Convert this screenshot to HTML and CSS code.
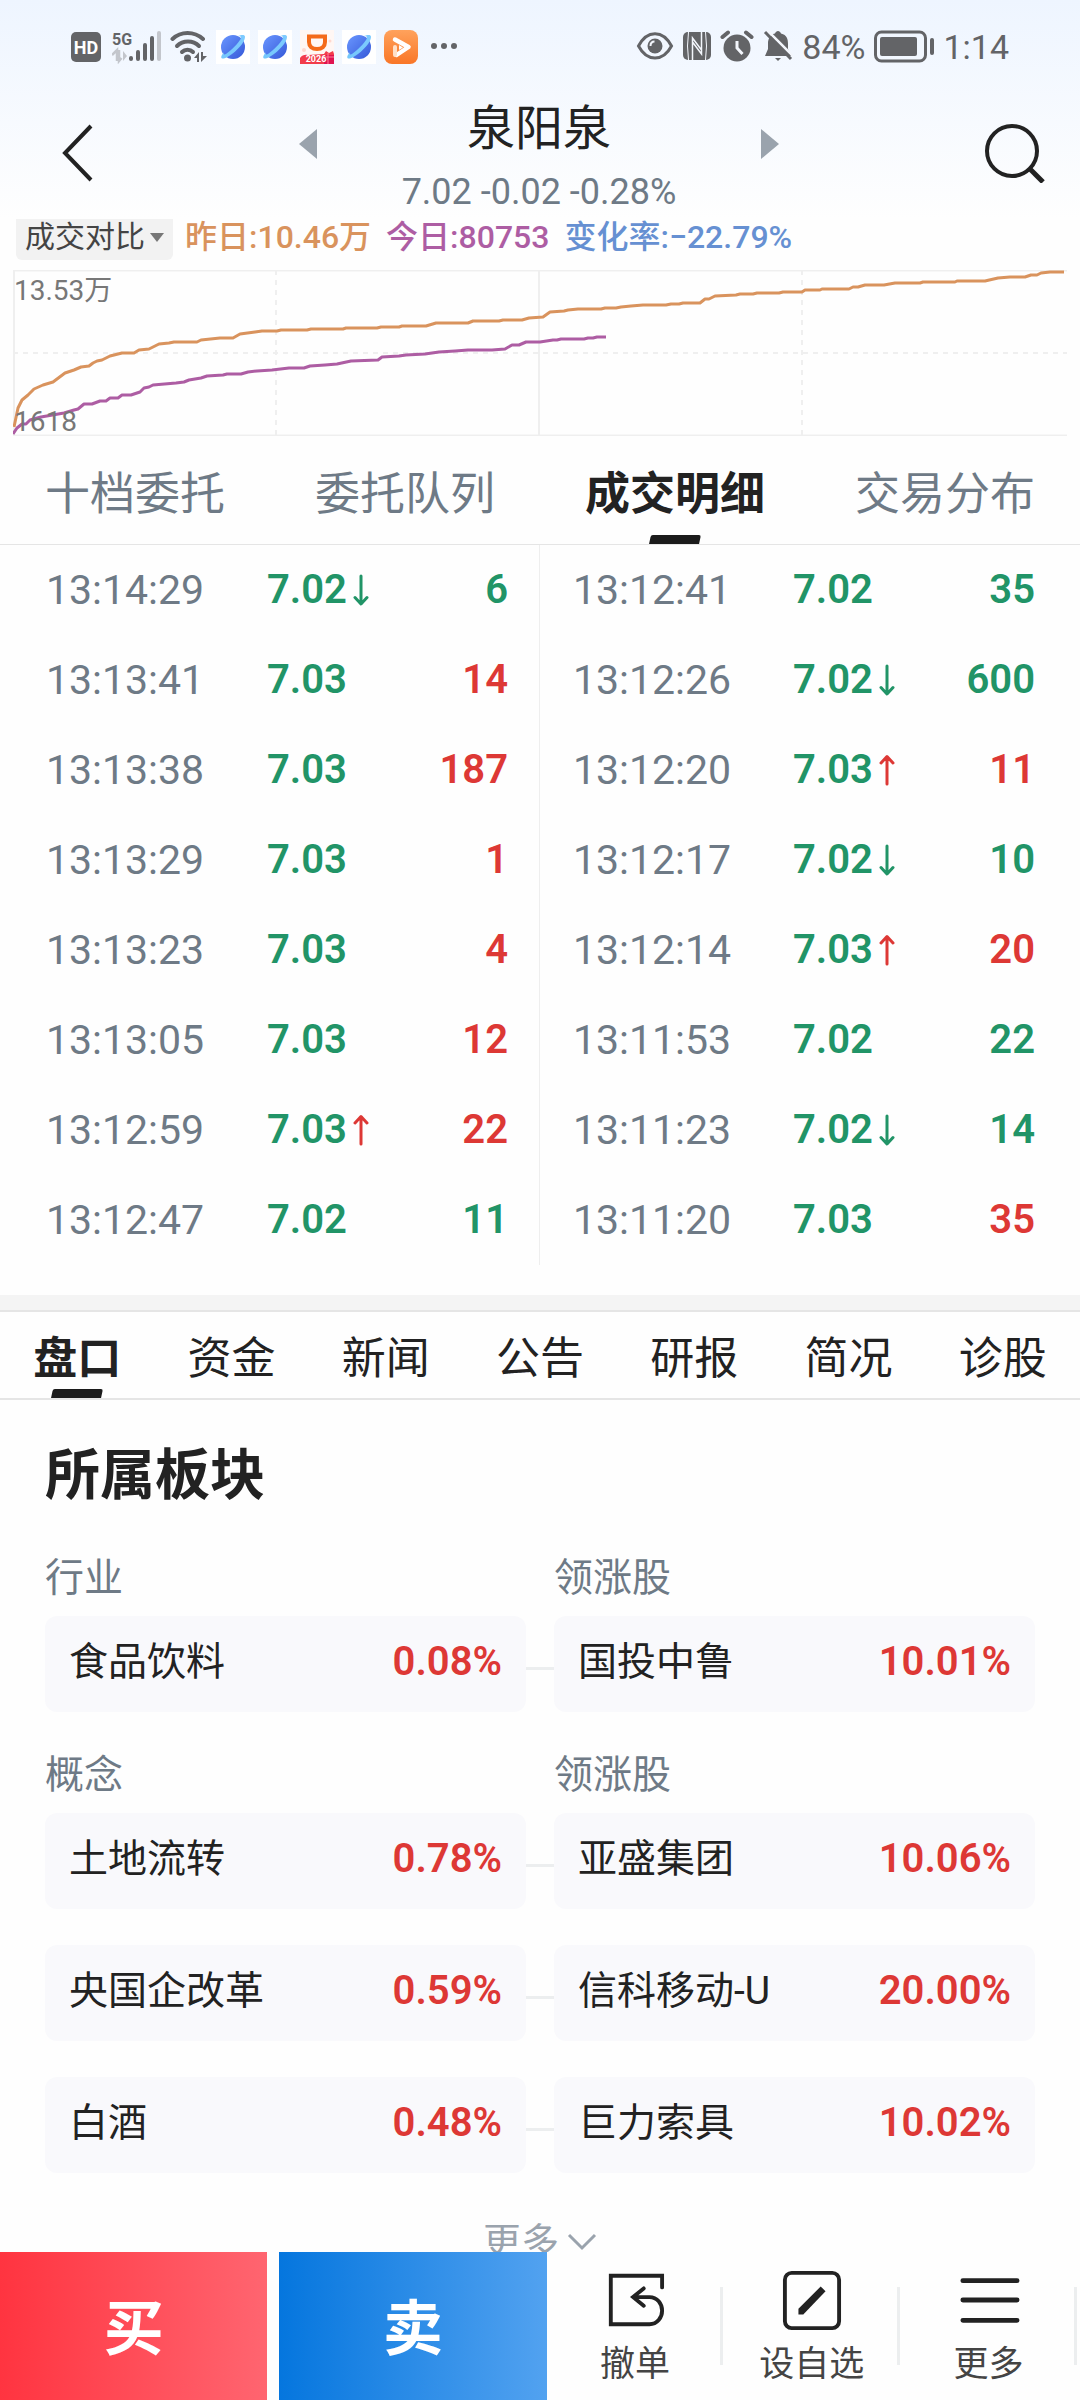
FILE: index.html
```html
<!DOCTYPE html>
<html lang="zh-CN">
<head>
<meta charset="utf-8">
<meta name="viewport" content="width=device-width, initial-scale=1">
<title>泉阳泉</title>
<link rel="stylesheet" href="styles.css">
</head>
<body>
<svg class="defs" width="0" height="0" aria-hidden="true">
  <defs>
    <linearGradient id="planet-fill" x1="0" y1="0" x2="1" y2="1"><stop offset="0" stop-color="#6a97ff"/><stop offset="1" stop-color="#3558d8"/></linearGradient>
    <linearGradient id="ring-fill" x1="0" y1="1" x2="1" y2="0"><stop offset="0" stop-color="#74c7fb"/><stop offset="1" stop-color="#7ecbff"/></linearGradient>
    <linearGradient id="play-fill" x1="0" y1="0" x2="0" y2="1"><stop offset="0" stop-color="#ffa25c"/><stop offset="1" stop-color="#f97627"/></linearGradient>
    <symbol id="planet" viewBox="0 0 34 34">
      <rect width="34" height="34" fill="#fff"/>
      <circle cx="17" cy="17" r="12" fill="url(#planet-fill)"/>
      <path d="M8 22C3 28 5 31 13 26C21 21 29 12 29 7C29 4 25 5 22 6C25 6 26 7 24 10C20 16 13 22 10 24C8 25 7 24 8 22Z" fill="url(#ring-fill)"/>
    </symbol>
    <symbol id="arrow-up" viewBox="0 0 16 32"><path d="M8 30V3M2 9L8 2.500L14 9" fill="none" stroke="currentColor" stroke-width="3" stroke-linecap="round" stroke-linejoin="round"/></symbol>
    <symbol id="arrow-down" viewBox="0 0 16 32"><path d="M8 2V29M2 23.500L8 30L14 23.500" fill="none" stroke="currentColor" stroke-width="3" stroke-linecap="round" stroke-linejoin="round"/></symbol>
  </defs>
</svg>
<div class="app">
  <main class="content">
    <div class="top">
      <div class="status">
        <div class="status-left">
          <svg class="ic-hd" viewBox="0 0 30 30"><rect width="30" height="30" rx="5" fill="#636467"/><text x="15" y="21.500" text-anchor="middle" class="hd-text">HD</text></svg>
          <svg class="ic-signal" viewBox="0 0 50 34">
            <text x="0" y="15" class="g-text">5G</text>
            <path d="M0 25L5 20V31M7 20V31L9.500 28" fill="none" stroke="#c3c6cc" stroke-width="2.500"/><path d="M11 21V31L15 26Z" fill="#c3c6cc"/>
            <g stroke="#636467" stroke-width="4" stroke-linecap="round"><path d="M19 28V29M26 22V29M33 15V29M40 8V29"/><path d="M47 3V29" stroke="#c3c6cc"/></g>
          </svg>
          <svg class="ic-wifi" viewBox="0 0 38 34">
            <g fill="none" stroke="#636467" stroke-width="4" stroke-linecap="round"><path d="M2.500 9C11 1 24 1 33 9"/><path d="M7 16C13 10 23 10 29 16"/><path d="M12 22C15 19 20 19 23 22"/></g>
            <circle cx="17.500" cy="28" r="3.500" fill="#636467"/>
            <path d="M24 28L29 22V32H27V28ZM31 22V32L37 26H33V22Z" fill="#636467"/>
          </svg>
          <svg class="ic-app"><use href="#planet"/></svg>
          <svg class="ic-app"><use href="#planet"/></svg>
          <svg class="ic-app" viewBox="0 0 34 34">
            <rect width="34" height="34" fill="#fff7f4"/>
            <path d="M9 6.500H25V12C25 16.500 22 19 17 19C12 19 9 16.500 9 12Z" fill="none" stroke="#f46a19" stroke-width="4"/>
            <circle cx="4" cy="20" r="2" fill="#ffd9cf"/><circle cx="30" cy="11" r="1.500" fill="#ffd9cf"/>
            <path d="M0 28Q3 24 8 25L24 24L26 21L29 23L33 21L34 24V34H0Z" fill="#f23c4b"/><path d="M24 25H34V34H24Z" fill="#e01350"/><path d="M28 23V34M24 27H34" stroke="#ff7f96"/>
            <text x="16" y="32" text-anchor="middle" class="year-text">2026</text>
          </svg>
          <svg class="ic-app"><use href="#planet"/></svg>
          <svg class="ic-app" viewBox="0 0 34 34">
            <rect width="34" height="34" rx="8" fill="url(#play-fill)"/>
            <path d="M11 9.500L24.500 17L12.500 25" fill="none" stroke="#fff" stroke-width="4.500" stroke-linecap="round" stroke-linejoin="round"/><path d="M11 17V25" stroke="#ffe0c8" stroke-width="4" stroke-linecap="round"/><path d="M15 15L19 17.500L15 20Z" fill="#fff"/>
          </svg>
          <svg class="ic-dots" viewBox="0 0 26 34"><g fill="#636467"><circle cx="3" cy="16" r="3"/><circle cx="13" cy="16" r="3"/><circle cx="23" cy="16" r="3"/></g></svg>
        </div>
        <div class="status-right">
          <svg class="ic-eye" viewBox="0 0 38 34"><path d="M2.500 16C11 -0.500 27 -0.500 35.500 16C27 32 11 32 2.500 16Z" fill="none" stroke="#636467" stroke-width="3"/><circle cx="19" cy="16" r="7.500" fill="#636467"/><path d="M14.500 16C14.500 13 16 11.500 18.500 11.500" fill="none" stroke="#f3f6fc" stroke-width="2"/></svg>
          <svg class="ic-nfc" viewBox="0 0 28 34"><rect y="2" width="28" height="28" rx="5" fill="#636467"/><path d="M5.500 2Q3.500 16 5.500 30M22.500 30Q24.500 16 22.500 2" fill="none" stroke="#f3f6fc" stroke-width="1"/><path d="M9.500 30V8L18.500 20M18.500 2V24L9.500 12" fill="none" stroke="#f3f6fc" stroke-width="1.500"/></svg>
          <svg class="ic-alarm" viewBox="0 0 34 34"><circle cx="17" cy="18" r="13.500" fill="#636467"/><path d="M2.500 7L8 2.500M31.500 7L26 2.500" stroke="#636467" stroke-width="4" stroke-linecap="round"/><path d="M17 11V18L22.500 24" fill="none" stroke="#f3f6fc" stroke-width="3"/></svg>
          <svg class="ic-bell" viewBox="0 0 30 34"><path d="M5 12C6 6 9 4 12 3.500C13 0 17 0 18 3.500C24 5 25 9 25 14V19L28 26H2L5 19Z" fill="#636467"/><path d="M12 28H18L15 31Z" fill="#636467"/><path d="M4 0L31 27" stroke="#f3f6fc" stroke-width="2.500"/><path d="M2 2L28 29" stroke="#636467" stroke-width="3"/></svg>
          <span>84%</span>
          <svg class="ic-battery" viewBox="0 0 60 34"><rect x="1.500" y="2" width="50" height="29" rx="6" fill="none" stroke="#636467" stroke-width="3"/><rect x="6" y="7" width="37" height="19" rx="2" fill="#636467"/><path d="M58 10V23" stroke="#636467" stroke-width="4" stroke-linecap="round"/></svg>
          <span>1:14</span>
        </div>
      </div>
      <header class="header">
        <button class="icon-btn back" aria-label="返回"><svg viewBox="0 0 32 58"><path d="M29 2L3 29L29 56" fill="none" stroke="#222" stroke-width="4"/></svg></button>
        <div class="stock">
          <button class="icon-btn step" aria-label="上一个"><svg viewBox="0 0 18 30"><path d="M18 0V30L0 15Z" fill="#9aa3ad"/></svg></button>
          <div class="stock-name"><h1>泉阳泉</h1><p>7.02 -0.02 -0.28%</p></div>
          <button class="icon-btn step" aria-label="下一个"><svg viewBox="0 0 18 30"><path d="M0 0V30L18 15Z" fill="#9aa3ad"/></svg></button>
        </div>
        <button class="icon-btn search" aria-label="搜索"><svg viewBox="0 0 62 60"><circle cx="28" cy="28" r="25" fill="none" stroke="#222" stroke-width="4"/><path d="M46 46L59 59" stroke="#222" stroke-width="5"/></svg></button>
      </header>
    </div>

    <section class="compare">
      <div class="legend">
        <label class="picker"><select aria-label="指标"><option>成交对比</option></select></label>
        <span class="orange">昨日:10.46万</span>
        <span class="purple">今日:80753</span>
        <span class="blue">变化率:−22.79%</span>
      </div>
      <div class="chart">
        <svg viewBox="0 0 1054 166" preserveAspectRatio="none" aria-hidden="true">
          <g fill="none" stroke="#efefef" stroke-width="2"><path d="M0 0.500H1054M1 0V165M0 165.500H1054M526 0V165"/><path d="M0 83H1054M263 0V165M789 0V165" stroke-dasharray="5 5"/></g>
          <polyline fill="none" stroke="#d9935d" stroke-width="3" stroke-linejoin="round" points="1,157 5,138 9,130 15,125 21,119 30,115 40,112 52,103 61,100 68,97 76,96 80,93 84,91 89,90 97,86 109,83 121,83 126,80 136,79 146,74 156,73 161,72 184,72 188,70 207,68 220,68 227,64 242,62 249,61 264,61 268,60 294,60 298,59 330,59 333,58 364,58 368,57 386,57 389,56 413,56 423,53 455,53 460,51 486,51 490,50 509,50 516,48 530,47 537,42 551,41 555,40 565,39 588,39 592,38 603,38 608,37 618,36 630,35 653,35 658,34 666,34 670,33 687,33 692,29 696,29 702,26 723,25 727,24 740,24 744,23 766,23 770,22 789,22 792,20 807,20 809,19 836,19 840,17 845,17 852,15 871,15 882,13 907,13 910,12 942,12 944,11 972,11 985,8 997,7 1012,7 1018,5 1024,5 1028,3 1037,2 1051,2"/>
          <polyline fill="none" stroke="#ad5da3" stroke-width="3" stroke-linejoin="round" points="0,164 4,158 9,154 13,154 17,150 28,147 51,143 61,140 65,139 71,134 79,134 87,131 93,131 97,128 105,128 109,125 118,125 127,122 131,118 136,117 140,115 163,113 171,112 176,110 188,108 194,106 210,105 214,104 228,104 235,102 244,101 259,100 276,98 291,98 297,96 312,95 324,94 338,91 365,90 369,87 386,86 393,85 412,84 426,82 442,81 455,80 479,80 492,79 499,75 506,75 513,72 527,72 540,70 544,70 548,69 571,69 575,68 580,68 584,67 593,67"/>
        </svg>
        <span class="axis axis-max">13.53万</span>
        <span class="axis axis-min">1618</span>
      </div>
    </section>

    <nav class="tabs tabs-quote">
      <button>十档委托</button><button>委托队列</button><button class="active">成交明细</button><button>交易分布</button>
    </nav>

    <section class="trades">
      <table class="ticks">
        <tr><td>13:14:29</td><td>7.02<svg class="down"><use href="#arrow-down"/></svg></td><td class="down">6</td></tr>
        <tr><td>13:13:41</td><td>7.03</td><td class="up">14</td></tr>
        <tr><td>13:13:38</td><td>7.03</td><td class="up">187</td></tr>
        <tr><td>13:13:29</td><td>7.03</td><td class="up">1</td></tr>
        <tr><td>13:13:23</td><td>7.03</td><td class="up">4</td></tr>
        <tr><td>13:13:05</td><td>7.03</td><td class="up">12</td></tr>
        <tr><td>13:12:59</td><td>7.03<svg class="up"><use href="#arrow-up"/></svg></td><td class="up">22</td></tr>
        <tr><td>13:12:47</td><td>7.02</td><td class="down">11</td></tr>
      </table>
      <table class="ticks">
        <tr><td>13:12:41</td><td>7.02</td><td class="down">35</td></tr>
        <tr><td>13:12:26</td><td>7.02<svg class="down"><use href="#arrow-down"/></svg></td><td class="down">600</td></tr>
        <tr><td>13:12:20</td><td>7.03<svg class="up"><use href="#arrow-up"/></svg></td><td class="up">11</td></tr>
        <tr><td>13:12:17</td><td>7.02<svg class="down"><use href="#arrow-down"/></svg></td><td class="down">10</td></tr>
        <tr><td>13:12:14</td><td>7.03<svg class="up"><use href="#arrow-up"/></svg></td><td class="up">20</td></tr>
        <tr><td>13:11:53</td><td>7.02</td><td class="down">22</td></tr>
        <tr><td>13:11:23</td><td>7.02<svg class="down"><use href="#arrow-down"/></svg></td><td class="down">14</td></tr>
        <tr><td>13:11:20</td><td>7.03</td><td class="up">35</td></tr>
      </table>
    </section>

    <nav class="tabs tabs-info">
      <button class="active">盘口</button><button>资金</button><button>新闻</button><button>公告</button><button>研报</button><button>简况</button><button>诊股</button>
    </nav>

    <section class="sectors">
      <h2>所属板块</h2>
      <div class="group">
        <div class="pair heads"><h3>行业</h3><h3>领涨股</h3></div>
        <div class="pair linked"><a href="#" class="card"><span>食品饮料</span><b>0.08%</b></a><a href="#" class="card"><span>国投中鲁</span><b>10.01%</b></a></div>
      </div>
      <div class="group">
        <div class="pair heads"><h3>概念</h3><h3>领涨股</h3></div>
        <div class="pair linked"><a href="#" class="card"><span>土地流转</span><b>0.78%</b></a><a href="#" class="card"><span>亚盛集团</span><b>10.06%</b></a></div>
        <div class="pair linked"><a href="#" class="card"><span>央国企改革</span><b>0.59%</b></a><a href="#" class="card"><span>信科移动-U</span><b>20.00%</b></a></div>
        <div class="pair linked"><a href="#" class="card"><span>白酒</span><b>0.48%</b></a><a href="#" class="card"><span>巨力索具</span><b>10.02%</b></a></div>
      </div>
      <button class="more">更多<svg viewBox="0 0 30 18"><path d="M2 2L15 15L28 2" fill="none" stroke="currentColor" stroke-width="3"/></svg></button>
    </section>
  </main>

  <footer class="actions">
    <button class="trade buy">买</button>
    <button class="trade sell">卖</button>
    <div class="tools">
      <button><svg viewBox="0 0 62 62"><path d="M59 18V6H6V56H46C54 56 59 49 59 42C59 35 54 28 46 28H30M40 19L29 28L40 37" fill="none" stroke="#222" stroke-width="4" stroke-linecap="round"/></svg>撤单</button>
      <button><svg viewBox="0 0 62 62"><rect x="3" y="3" width="56" height="57" rx="7" fill="none" stroke="#222" stroke-width="4"/><path d="M17 46V40L40 17L45 22L22 46Z" fill="#222"/></svg>设自选</button>
      <button><svg viewBox="0 0 62 62"><path d="M4 11H60M4 31H60M4 52H60" stroke="#222" stroke-width="5" stroke-linecap="round"/></svg>更多</button>
    </div>
  </footer>
</div>
</body>
</html>
```
FILE: styles.css
```css
* { box-sizing: border-box; }

body {
  margin: 0;
  background: #fefefe;
  color: #222;
  font-family: Roboto, "Noto Sans CJK SC", sans-serif;
}

button, select {
  border: 0;
  padding: 0;
  background: none;
  color: inherit;
  font: inherit;
}

h1, h2, h3, p { margin: 0; font-weight: 400; }
a { color: inherit; text-decoration: none; }
svg { display: block; }
.defs { position: absolute; }

.app {
  display: flex;
  flex-direction: column;
  height: 100vh;
}

.content {
  flex: 1;
  min-height: 0;
  overflow-y: auto;
  scrollbar-width: none;
}

/* status bar and header */
.top { background: linear-gradient(#eef5ff, #fefefe); }

.status {
  display: flex;
  justify-content: space-between;
  padding: 30px 71px 28px;
  color: #636467;
  font-size: 34px;
  line-height: 34px;
}

.status-left, .status-right { display: flex; align-items: center; }
.status svg { flex: none; height: 34px; }
.status-left { gap: 8px; }
.status .ic-hd { width: 30px; height: 30px; }
.ic-signal { width: 50px; margin-left: 3px; }
.ic-wifi { width: 38px; }
.ic-app { width: 34px; }
.ic-dots { width: 26px; margin-left: 5px; }
.status-right { gap: 9px; }
.ic-eye { width: 38px; }
.ic-nfc { width: 28px; }
.ic-alarm { width: 34px; }
.ic-bell { width: 30px; }
.ic-battery { width: 60px; }
.hd-text { font-size: 18px; font-weight: 700; fill: #fff; }
.g-text { font-size: 16px; font-weight: 700; fill: #636467; }
.year-text { font-size: 9px; font-weight: 700; fill: #fff; }

.header {
  display: flex;
  justify-content: space-between;
  align-items: center;
  height: 127px;
  padding: 0 34px 0 62px;
}

.icon-btn { display: block; flex: none; }
.back, .search { padding-bottom: 6px; }
.back svg { width: 32px; height: 58px; }
.step svg { width: 18px; height: 30px; }
.search svg { width: 62px; height: 60px; }

.stock {
  display: flex;
  justify-content: space-between;
  width: 480px;
}

.step { align-self: center; padding-bottom: 24px; }
.stock-name { padding-top: 6px; text-align: center; }
.stock-name h1 { font-size: 48px; line-height: 66px; }
.stock-name p { font-size: 36px; line-height: 60px; color: #6e7a86; }

/* volume comparison */
.legend {
  display: flex;
  align-items: center;
  gap: 15px;
  height: 41px;
  padding-left: 16px;
  font-size: 32px;
  font-weight: 500;
  line-height: 36px;
  white-space: nowrap;
}
.legend span { padding-bottom: 5px; }

.picker {
  display: flex;
  align-items: center;
  gap: 5px;
  height: 41px;
  margin-right: -3px;
  padding: 0 9px 5px;
  border-radius: 0 0 6px 6px;
  background: #f2f2f2;
  color: #444;
  font-size: 30px;
  font-weight: 400;
}

.picker select { appearance: none; width: 120px; line-height: 36px; }
.picker::after {
  content: "";
  border: 7px solid transparent;
  border-top: 9px solid #777;
  border-bottom: 0;
}

.orange { color: #d9935d; }
.purple { color: #ad5da3; }
.blue { color: #6690d2; }

.chart { position: relative; margin: 10px 13px 0; }
.chart svg { width: 100%; height: 166px; }
.axis {
  position: absolute;
  left: 1px;
  color: #777;
  font-size: 28px;
  line-height: 32px;
}
.axis-max { top: 5px; }
.axis-min { bottom: -2px; }

/* tabs */
.tabs { display: flex; border-bottom: 1px solid #e5e5e5; font-size: 44px; }
.tabs button { position: relative; flex: 1; white-space: nowrap; }
.tabs .active { color: #222; font-weight: 700; }
.tabs .active::after {
  content: "";
  position: absolute;
  bottom: 0;
  left: 50%;
  width: 50px;
  height: 9px;
  border-radius: 2px 2px 0 0;
  background: #1b1b1b;
  transform: translateX(-50%) skewX(-12deg);
}
.tabs-quote { height: 109px; color: #6e7a86; font-size: 45px; }
.tabs-info {
  height: 90px;
  margin-top: 45px;
  border-top: 2px solid #e5e5e5;
  border-bottom-width: 2px;
  box-shadow: 0 -15px #f4f4f4;
}

/* trade ticks */
.trades { display: grid; grid-template-columns: 1fr 1fr; }

.ticks {
  width: 100%;
  border-collapse: collapse;
  table-layout: fixed;
  font-size: 40px;
  font-weight: 600;
  line-height: 48px;
}

.ticks:first-child { border-right: 1px solid #eee; }
.ticks td { height: 90px; padding: 0; }
.ticks td:nth-child(1) { width: 267px; padding-left: 46px; color: #6e7a86; font-size: 41px; font-weight: 400; }
.ticks td:nth-child(2) { color: #219467; white-space: nowrap; }
.ticks td:nth-child(3) { width: 120px; padding-right: 31px; text-align: right; }
.ticks:last-child td:nth-child(1) { width: 253px; padding-left: 33px; }
.ticks:last-child td:nth-child(3) { padding-right: 45px; }
.ticks svg { display: inline-block; width: 16px; height: 32px; margin-left: 6px; vertical-align: -3px; }
.ticks .up { color: #dd3835; }
.ticks .down { color: #219467; }

/* sectors */
.sectors { padding: 0 45px; }
.sectors h2 { padding-top: 35px; font-size: 55px; font-weight: 700; line-height: 80px; }
.pair { display: grid; grid-template-columns: 1fr 1fr; gap: 28px; }
.group { display: grid; gap: 36px; margin-top: 38px; }
.heads { height: 32px; margin-bottom: -5px; }
.heads h3 { font-size: 39px; line-height: 50px; color: #6e7a86; }

.card {
  display: flex;
  justify-content: space-between;
  align-items: baseline;
  height: 96px;
  padding: 0 24px;
  border-radius: 12px;
  background: #f9f9fc;
  font-size: 39px;
  line-height: 92px;
}
.card b { color: #dd3835; font-size: 40px; font-weight: 600; }
.linked {
  background: linear-gradient(#eceeef, #eceeef) center 51px / 28px 3px no-repeat;
}

.more {
  display: flex;
  align-items: center;
  gap: 8px;
  margin: 44px auto 0;
  color: #9aa3ad;
  font-size: 38px;
  line-height: 50px;
}
.more svg { width: 30px; height: 18px; }

/* bottom actions */
.actions {
  display: flex;
  flex: none;
  height: 148px;
  background: #fefefe;
}
.trade { flex: 268; padding-bottom: 5px; color: #fff; font-size: 60px; font-weight: 700; }
.buy { margin-right: 12px; background: linear-gradient(90deg, #ff3440, #ff6570); }
.sell { background: linear-gradient(90deg, #0576de, #52a2f0); }
.tools { display: flex; flex: 532; padding-right: 3px; }
.tools button {
  position: relative;
  flex: 1;
  display: flex;
  flex-direction: column;
  align-items: center;
  padding-top: 18px;
  color: #444;
  font-size: 35px;
  line-height: 70px;
}
.tools button::after {
  content: "";
  position: absolute;
  right: 0;
  top: 35px;
  width: 3px;
  height: 78px;
  background: #eceeef;
}
.tools svg { width: 62px; height: 62px; }
```
